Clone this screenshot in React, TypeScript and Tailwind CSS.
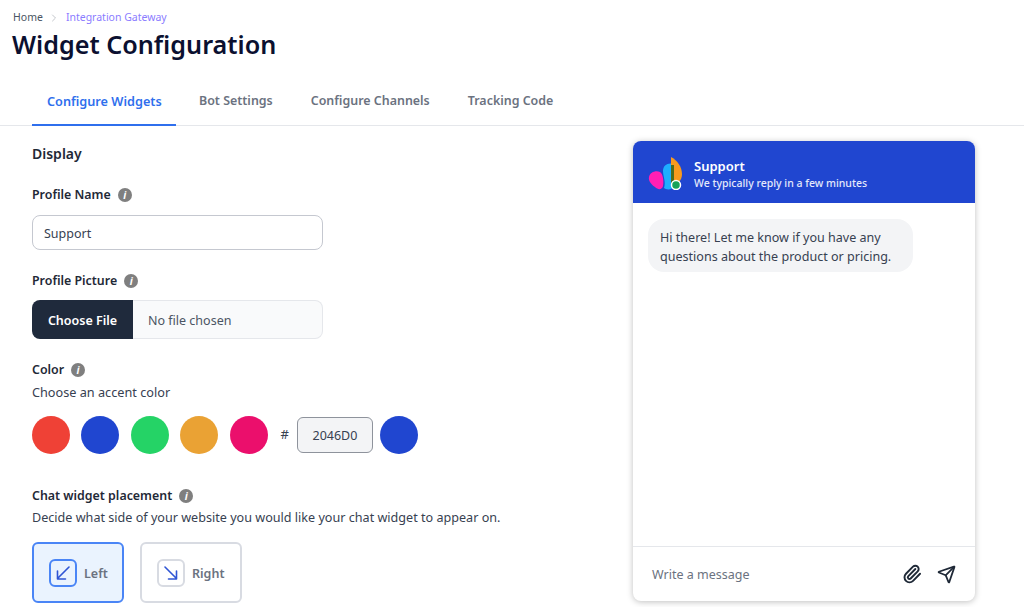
import { ChevronRight, Paperclip, Send } from "lucide-react";

const swatches = ["bg-[#EF4136]", "bg-[#2046D0]", "bg-[#25D366]", "bg-[#EAA234]", "bg-[#EB0F6C]"];
const tabs = ["Bot Settings", "Configure Channels", "Tracking Code"];

function InfoDot() {
  return (
    <span className="ml-[7px] w-[14px] h-[14px] rounded-full bg-[#7f7f7f] flex items-center justify-center text-white text-[10px] font-bold italic leading-none">
      i
    </span>
  );
}

function FieldLabel({ children }: { children: string }) {
  return (
    <div className="flex items-center h-5 text-[12.4px] font-semibold text-[#1f2937]">
      {children}
      <InfoDot />
    </div>
  );
}

function Logo() {
  return (
    <svg width="36" height="36" viewBox="0 0 36 36" className="shrink-0">
      <path d="M2 23C3 18 9 16 13 18C16 20 17 27 16 32C15 36 11 36 8 33C5 31 1 27 2 23z" fill="#FF1FB4" />
      <path d="M16 17C16 11 21 8 27 10V33C25 36 19 36 17 34C19 28 16 22 16 17z" fill="#1DAFFF" />
      <path d="M24 3C30 6 35 13 35 20C35 27 30 31 24 31z" fill="#F79A1E" />
      <path d="M24 11h3v20h-3z" fill="#4D6B1E" />
      <circle cx="29" cy="31" r="4.5" fill="#16A35A" stroke="#fff" strokeWidth="1.5" />
    </svg>
  );
}

function PlacementArrow({ right }: { right?: boolean }) {
  return (
    <svg width="14" height="14" viewBox="0 0 14 14" fill="none" stroke="#2f55d4" strokeWidth="1.6" strokeLinecap="round" strokeLinejoin="round">
      {right ? <path d="M1 1l11.5 11.5M12.5 5v8h-8" /> : <path d="M13 1L1.5 12.5M1.5 5v8h8" />}
    </svg>
  );
}

export default function App() {
  return (
    <div className="w-[1024px] h-[607px] overflow-hidden bg-white font-['Noto_Sans',sans-serif] text-[#1f2937]">
      {/* Header */}
      <div className="pl-3 pt-[10px]">
        <div className="flex items-center h-[15px] text-[10.5px]">
          <span className="text-[#4b5563] ml-px">Home</span>
          <ChevronRight className="w-3 h-3 mx-[5px] text-[#c4c7cc]" />
          <span className="ml-px text-[#8b7cff]">Integration Gateway</span>
        </div>
        <h1 className="mt-px text-[25.2px] leading-[36px] font-semibold text-[#0b1030]">Widget Configuration</h1>
      </div>

      {/* Tabs */}
      <div className="mt-[19px] flex gap-2 pl-8 h-[45px] border-b border-[#e5e7eb] text-[12.45px] font-semibold text-[#6b7280]">
        <div className="w-[144px] h-[45px] pl-[15px] pb-[2px] text-[12.7px] flex items-center border-b-2 border-[#2f6fed] text-[#2f6fed]">Configure Widgets</div>
        {tabs.map((t) => (
          <div key={t} className="h-[45px] px-[15px] pb-[4px] flex items-center">
            {t}
          </div>
        ))}
      </div>

      <div className="flex">
        {/* Form */}
        <div className="w-[633px] pl-8 pt-[18px]">
          <h2 className="text-[14px] leading-5 font-semibold">Display</h2>

          <div className="mt-[21px]"><FieldLabel>Profile Name</FieldLabel></div>
          <div className="mt-[10px] w-[291px] h-[35px] border border-[#c5c8d0] rounded-lg flex items-center pl-[11px] pt-[3px] text-[12.5px] text-[#374151]">Support</div>

          <div className="mt-[21px]"><FieldLabel>Profile Picture</FieldLabel></div>
          <div className="mt-[9px] w-[291px] h-[39px] flex items-center text-[12.5px]">
            <div className="w-[101px] h-full pt-[3px] rounded-l-lg bg-[#1f2a3c] text-white font-semibold flex items-center justify-center">Choose File</div>
            <div className="flex-1 h-full pl-[15px] pt-[3px] flex items-center border-y border-r border-[#e5e7eb] rounded-r-lg bg-[#f9fafb] text-[#4b5563]">No file chosen</div>
          </div>

          <div className="mt-[21px]"><FieldLabel>Color</FieldLabel></div>
          <div className="mt-[2px] text-[12.7px] leading-5 text-[#374151]">Choose an accent color</div>
          <div className="mt-[14px] flex items-center">
            <div className="flex gap-[11.4px]">
              {swatches.map((c) => (
                <div key={c} className={`${c} w-[38px] h-[38px] rounded-full`} />
              ))}
            </div>
            <span className="ml-[13px] text-[13px] text-[#374151]">#</span>
            <div className="ml-[8px] w-[76px] h-[36px] pt-[2px] border border-[#8e939c] rounded-md bg-[#f3f4f6] flex items-center justify-center text-[12.5px] text-[#374151]">2046D0</div>
            <div className="ml-[7px] w-[38px] h-[38px] rounded-full bg-[#2046D0]" />
          </div>

          <div className="mt-8"><FieldLabel>Chat widget placement</FieldLabel></div>
          <div className="mt-[2px] text-[12.6px] leading-5 text-[#374151]">Decide what side of your website you would like your chat widget to appear on.</div>
          <div className="mt-[14px] flex gap-4">
            <div className="w-[92px] h-[61px] border-2 border-[#4a85f6] rounded-md bg-[#eaf3fe] flex items-center pl-[15px]">
              <div className="w-7 h-7 border-2 border-[#4a85f6] rounded-md flex items-center justify-center">
                <PlacementArrow />
              </div>
              <span className="ml-[7px] pt-[3px] text-[12.5px] font-semibold text-[#6b7280]">Left</span>
            </div>
            <div className="w-[102px] h-[61px] border-2 border-[#d8dbe2] rounded-md bg-white flex items-center pl-[15px]">
              <div className="w-7 h-7 border-2 border-[#d8dbe2] rounded-md flex items-center justify-center">
                <PlacementArrow right />
              </div>
              <span className="ml-[7px] pt-[3px] text-[12.5px] font-semibold text-[#6b7280]">Right</span>
            </div>
          </div>
        </div>

        {/* Chat preview */}
        <div className="mt-[15px] w-[342px] h-[460px] rounded-lg shadow-[0_1px_6px_rgba(0,0,0,0.25)] bg-white flex flex-col overflow-hidden">
          <div className="h-[62px] bg-[#2046D0] flex items-center pl-[14px] text-white">
            <Logo />
            <div className="ml-[11px] pt-[3px]">
              <div className="text-[13px] leading-[18px] font-semibold">Support</div>
              <div className="mt-px text-[10.5px] leading-[15px] font-medium text-[#e4e9fb]">We typically reply in a few minutes</div>
            </div>
          </div>
          <div className="flex-1 pl-[15px] pt-4">
            <div className="w-[265px] h-[53px] rounded-2xl bg-[#f3f4f6] px-3 pt-[2px] flex items-center text-[12.55px] leading-[19px] text-[#374151]">
              Hi there! Let me know if you have any questions about the product or pricing.
            </div>
          </div>
          <div className="h-[55px] border-t border-[#e5e7eb] flex items-center pl-[19px] pr-[19px]">
            <span className="flex-1 pt-[2px] text-[12.5px] text-[#6b7280]">Write a message</span>
            <Paperclip className="w-5 h-5 text-[#1f2937]" strokeWidth={2.3} />
            <Send className="ml-[15px] w-[19px] h-[19px] text-[#1f2937]" strokeWidth={2.2} />
          </div>
        </div>
      </div>
    </div>
  );
}
